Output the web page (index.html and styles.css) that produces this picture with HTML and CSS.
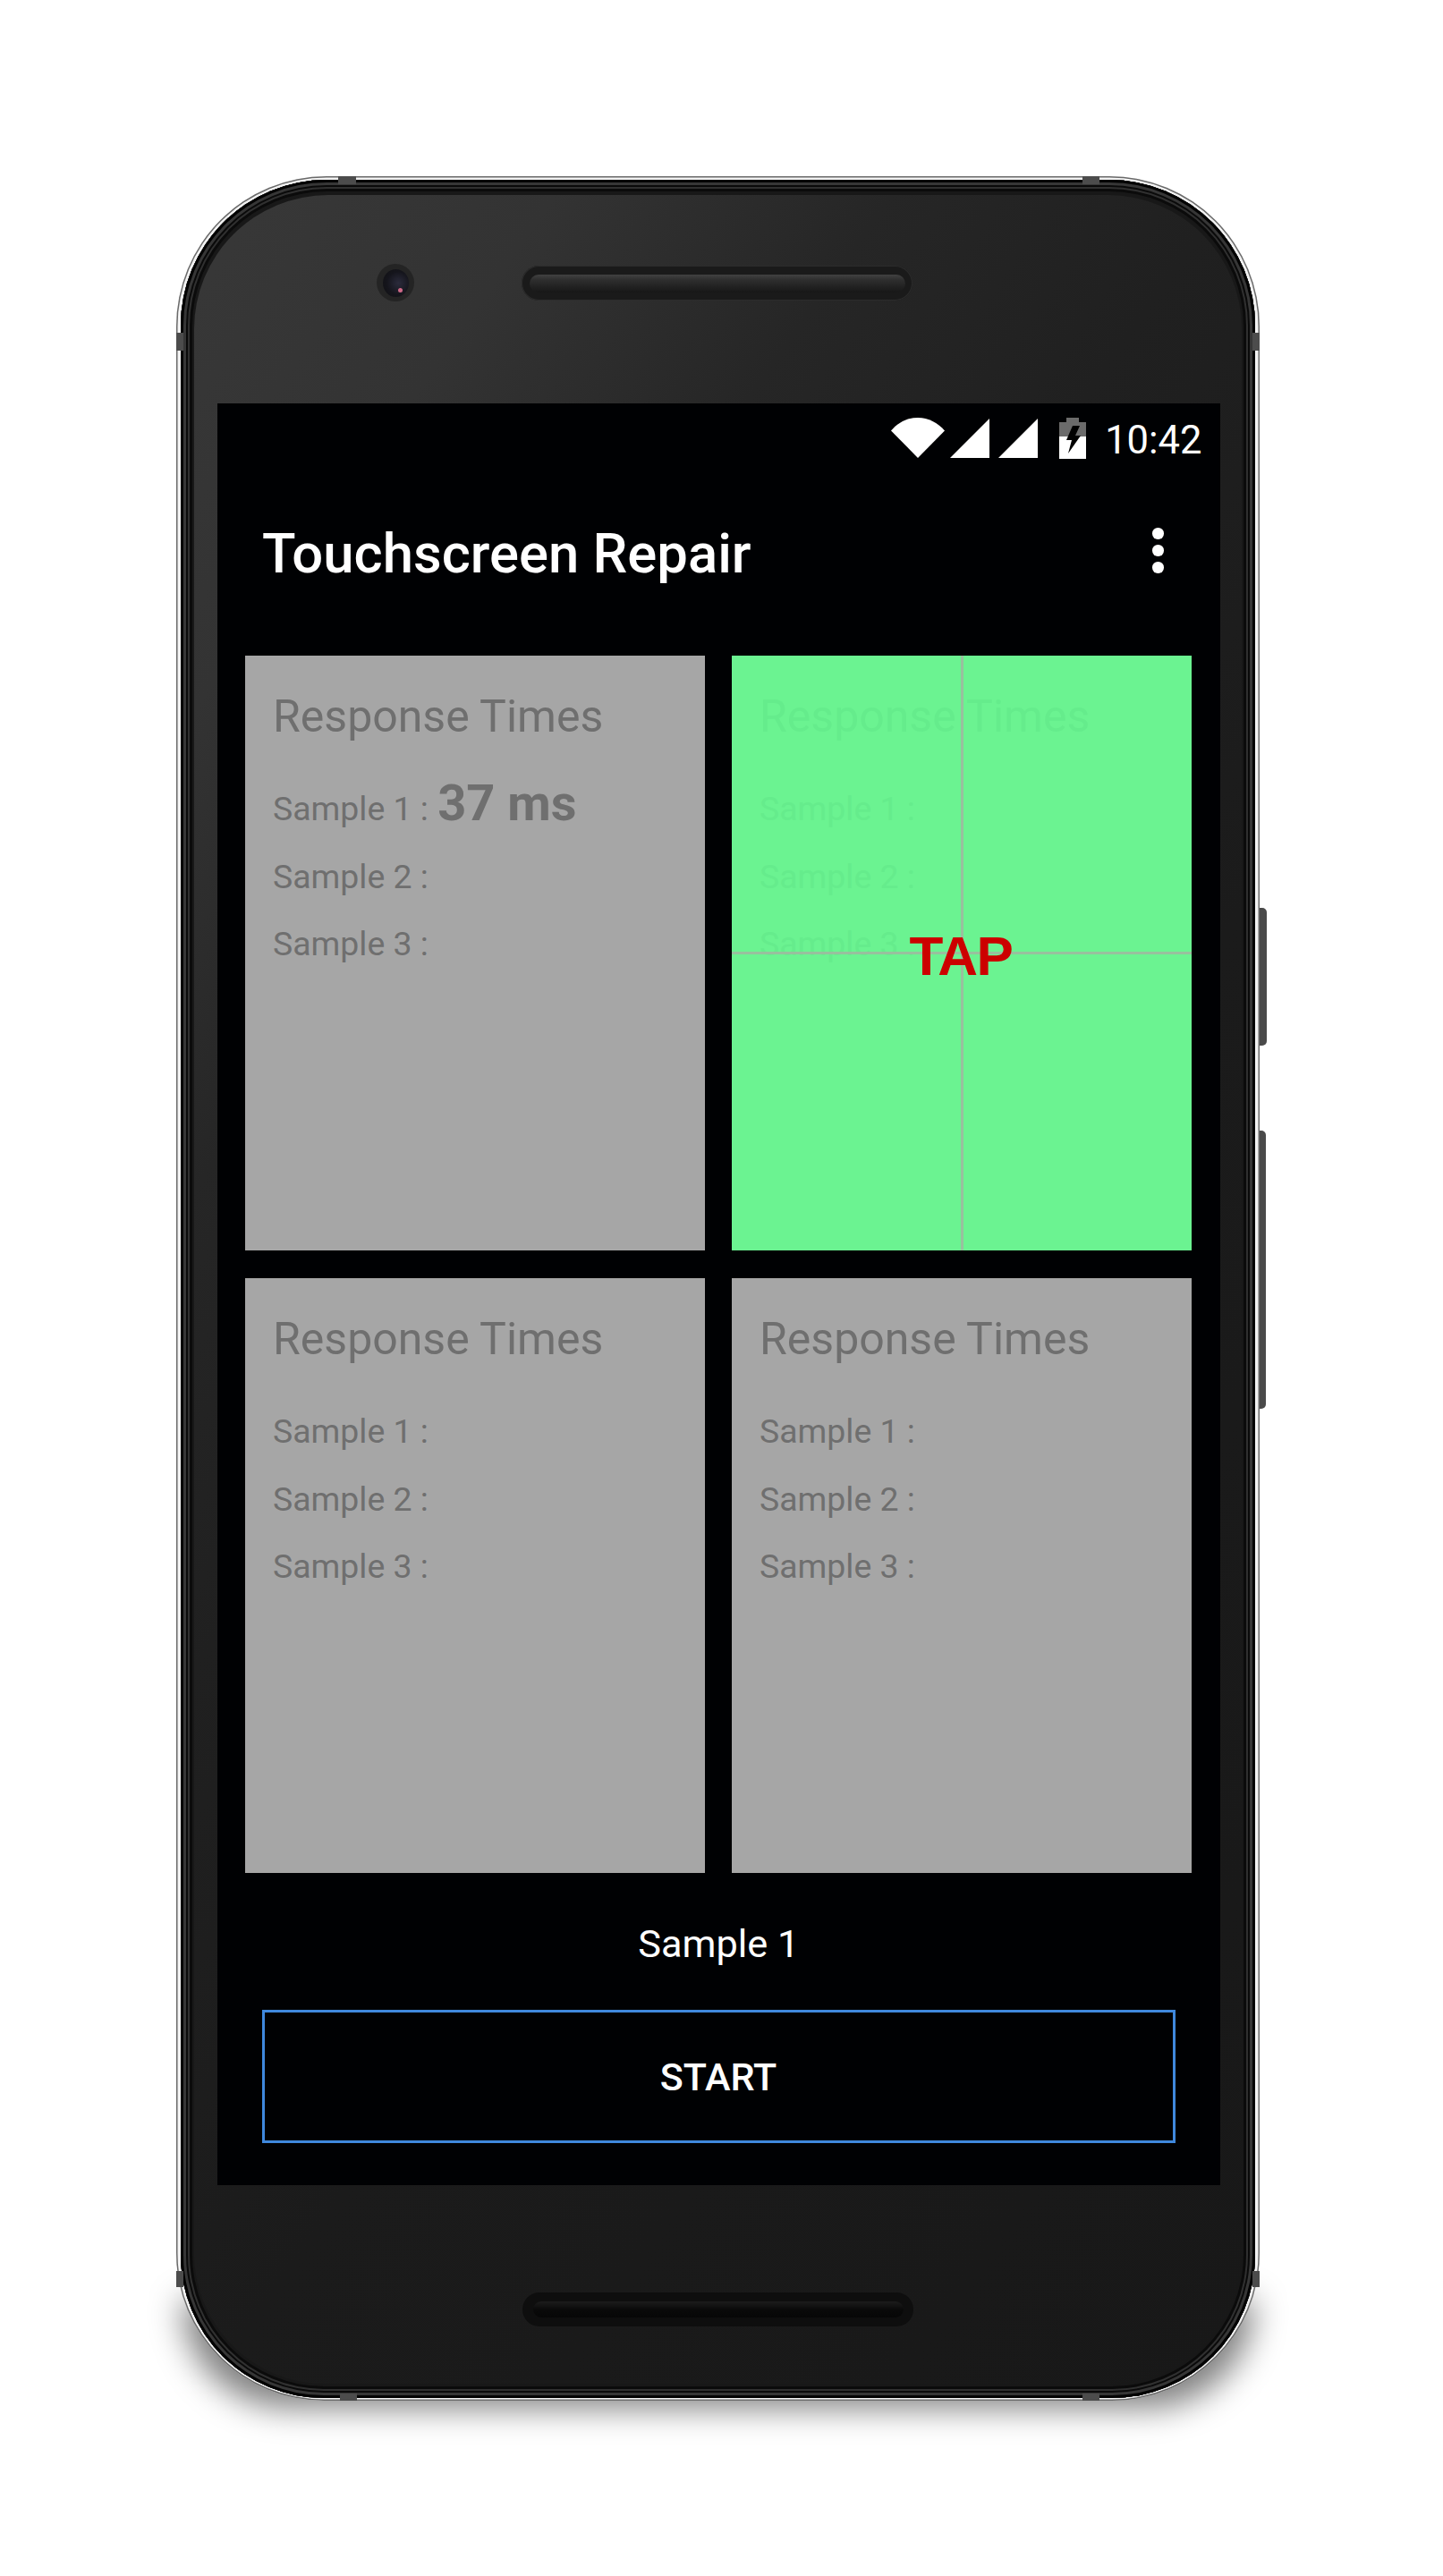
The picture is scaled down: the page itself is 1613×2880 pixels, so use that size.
FILE: index.html
```html
<!DOCTYPE html>
<html lang="en">
<head>
<meta charset="utf-8">
<title>Touchscreen Repair</title>
<link rel="stylesheet" href="styles.css">
</head>
<body>
<div class="device">
  <div class="ground-shadow"></div>
  <div class="side-key key-power"></div>
  <div class="side-key key-volume"></div>
  <div class="metal">
    <span class="notch notch-tl"></span><span class="notch notch-tr"></span>
    <span class="notch notch-lt"></span><span class="notch notch-rt"></span>
    <span class="notch notch-lb"></span><span class="notch notch-rb"></span>
    <span class="notch notch-bl"></span><span class="notch notch-br"></span>
    <div class="rim">
      <div class="face">
        <div class="bezel-top">
          <div class="camera"><div class="lens"><span class="glint"></span></div></div>
          <div class="speaker speaker-top"><div class="grille"></div></div>
        </div>
        <main class="screen">
          <div class="status">
            <svg class="ic-wifi" viewBox="0 0 60 45"><path d="M0 14.500C8 5.500 18 0 30 0s22 5.500 30 14.500L30 45z"/></svg>
            <svg class="ic-signal" viewBox="0 0 44 44"><path d="M44 0v44H0z"/></svg>
            <svg class="ic-signal" viewBox="0 0 44 44"><path d="M44 0v44H0z"/></svg>
            <svg class="ic-battery" viewBox="0 0 30 46"><path fill="#6b6b6b" d="M0 5h8V0h14v5h8v16H0z"/><path fill="#fff" d="M0 21h30v25H0z"/><path fill="#000" d="M15 9h8l-5 11h6L10 40l4-15H8z"/></svg>
            <span class="clock">10:42</span>
          </div>
          <header class="appbar">
            <h1 class="app-title">Touchscreen Repair</h1>
            <div class="overflow"><i></i><i></i><i></i></div>
          </header>
          <div class="grid">
            <section class="card">
              <h2 class="card-title">Response Times</h2>
              <p class="row row-first">Sample 1 : <b class="val">37 ms</b></p>
              <p class="row">Sample 2 :</p>
              <p class="row">Sample 3 :</p>
            </section>
            <section class="card card-active">
              <h2 class="card-title">Response Times</h2>
              <p class="row row-first">Sample 1 :</p>
              <p class="row">Sample 2 :</p>
              <p class="row">Sample 3 :</p>
              <span class="cross-v"></span><span class="cross-h"></span>
              <span class="tap">TAP</span>
            </section>
            <section class="card">
              <h2 class="card-title">Response Times</h2>
              <p class="row row-first">Sample 1 :</p>
              <p class="row">Sample 2 :</p>
              <p class="row">Sample 3 :</p>
            </section>
            <section class="card">
              <h2 class="card-title">Response Times</h2>
              <p class="row row-first">Sample 1 :</p>
              <p class="row">Sample 2 :</p>
              <p class="row">Sample 3 :</p>
            </section>
          </div>
          <div class="sample-label">Sample 1</div>
          <button class="start">START</button>
        </main>
        <div class="bezel-bottom">
          <div class="speaker speaker-bottom"><div class="grille"></div></div>
        </div>
      </div>
    </div>
  </div>
</div>
</body>
</html>
```
FILE: styles.css
```css
* { box-sizing: border-box; }
html, body { margin: 0; padding: 0; background: #fff; }
body { width: 1613px; height: 2880px; overflow: hidden; font-family: Roboto, "Liberation Sans", sans-serif; }

.device { position: relative; width: 1211px; height: 2487px; margin: 197px 0 0 197px; }

.ground-shadow {
  position: absolute; left: 6px; right: 6px; bottom: -8px; height: 120px;
  border-radius: 0 0 160px 160px;
  background: rgba(0,0,0,.5);
  filter: blur(18px);
}

.side-key { position: absolute; left: 1205px; background: #4a4a4a; border-radius: 0 5px 5px 0; }
.key-power { top: 818px; width: 14px; height: 154px; }
.key-volume { top: 1067px; width: 13px; height: 311px; }

.metal {
  position: relative; height: 100%; padding: 4px 5px 3px 5px;
  border-radius: 168px 168px 165px 165px;
  background: #f2f2f2;
  box-shadow: inset 0 0 0 1.500px #6a6a6a;
}
.notch { position: absolute; background: #4c4c4c; z-index: 2; }
.notch-tl { left: 181px; top: 0; width: 20px; height: 9px; }
.notch-tr { left: 1013px; top: 0; width: 19px; height: 9px; }
.notch-bl { left: 183px; bottom: 0; width: 19px; height: 8px; }
.notch-br { left: 1013px; bottom: 0; width: 19px; height: 8px; }
.notch-lt { left: 0; top: 175px; width: 8px; height: 20px; }
.notch-rt { right: 0; top: 175px; width: 8px; height: 20px; }
.notch-lb { left: 0; top: 2342px; width: 8px; height: 18px; }
.notch-rb { right: 0; top: 2342px; width: 8px; height: 18px; }

.rim {
  height: 100%; padding: 17px 15px 16px 15px;
  border-radius: 163px 163px 160px 160px;
  background: #181818;
  box-shadow:
    inset 0 0 0 3px #030303,
    inset 0 0 0 6px #363636,
    inset 0 0 0 8px #0a0a0a,
    inset 0 0 0 10px #303030,
    inset 0 0 0 13px #0b0b0b;
}

.face {
  height: 100%; display: flex; flex-direction: column;
  border-radius: 150px 150px 146px 146px;
  background: linear-gradient(125deg, #383838 0, #333 14%, #262626 27%, #202020 40%, #1b1b1b 60%, #181818 100%);
}

.bezel-top { height: 233px; position: relative; flex: none; }
.camera {
  position: absolute; left: 204px; top: 77px; width: 42px; height: 42px; border-radius: 50%;
  background: #242424; display: flex; align-items: center; justify-content: center;
}
.lens {
  position: relative; width: 29px; height: 31px; border-radius: 50%;
  background: radial-gradient(circle at 60% 50%, #2b2b3c 0, #15151c 55%, #101012 100%);
}
.glint { position: absolute; left: 17px; top: 21px; width: 5px; height: 5px; border-radius: 50%; background: #d06a88; }

.speaker { position: absolute; display: flex; align-items: center; justify-content: center; }
.speaker-top {
  left: 366px; top: 79px; width: 437px; height: 39px; border-radius: 20px;
  background: #1a1a1a; box-shadow: inset 0 0 0 1px #2c2c2c;
}
.speaker-top .grille {
  width: 420px; height: 20px; border-radius: 10px;
  background: linear-gradient(180deg, #414141 0, #2e2e2e 30%, #171717 100%);
}

.screen {
  flex: none; width: 1120.500px; height: 1992px; margin-left: 26px; background: #000103;
  display: flex; flex-direction: column; color: #fff;
}
.status { height: 90px; flex: none; display: flex; align-items: flex-start; padding: 16px 20px 0 0; justify-content: flex-end; }
.status svg { display: block; fill: #fff; flex: none; }
.ic-wifi { width: 60px; height: 45px; margin-right: 6px; }
.ic-signal { width: 44px; height: 44px; margin-right: 10px; margin-top: 1px; }
.ic-battery { width: 30px; height: 46px; margin-left: 14.500px; margin-right: 21px; }
.clock { font-size: 43.500px; line-height: 46px; margin-top: 3px; font-weight: 400; }

.appbar { height: 192px; flex: none; position: relative; display: flex; align-items: flex-start; padding-left: 50px; }
.app-title { margin: 0; padding-top: 44px; font-size: 61.600px; line-height: 68px; font-weight: 500; color: #fff; }
.overflow { position: absolute; left: 1045px; top: 49px; display: flex; flex-direction: column; gap: 6.500px; }
.overflow i { display: block; width: 12.500px; height: 12.500px; border-radius: 50%; background: #fff; }

.grid {
  flex: none; display: grid; grid-template-columns: 513.500px 514px; grid-auto-rows: 665px;
  column-gap: 30.500px; row-gap: 31px; padding-left: 31px;
}
.card { position: relative; background: #a6a6a6; color: #6f6f6f; padding: 32.500px 0 0 31px; overflow: hidden; }
.card-title { margin: 0; font-size: 50px; line-height: 70px; font-weight: 400; }
.row { margin: 0; font-size: 37.400px; line-height: 75.500px; height: 75.500px; white-space: nowrap; }
.row-first { margin-top: 31.500px; }
.val { font-size: 56px; font-weight: 700; line-height: 0; margin-left: 1px; }

.card-active { background: #6bf391; color: #65ec8c; }
.cross-v { position: absolute; left: 255.500px; top: 0; bottom: 0; width: 3px; background: #98c09e; }
.cross-h { position: absolute; left: 0; right: 0; top: 331px; height: 3px; background: #98c09e; }
.tap {
  position: absolute; left: 0; right: 2px; top: 300.500px; text-align: center;
  font-family: "Liberation Sans", Arial, sans-serif; font-size: 62px; letter-spacing: -1.500px; line-height: 70px; font-weight: 700; color: #cc0000;
}

.sample-label { flex: none; height: 153px; padding-top: 55px; text-align: center; font-size: 43.300px; line-height: 50px; }
.start {
  flex: none; display: block; width: 1021px; height: 149px; margin-left: 49.500px;
  background: #000103; border: 3.500px solid #3f88dd; border-radius: 0; color: #fff;
  font-family: Roboto, "Liberation Sans", sans-serif; font-size: 43px; font-weight: 500; padding: 0;
}

.bezel-bottom { flex: 1; position: relative; }
.speaker-bottom {
  left: 367px; top: 120px; width: 437px; height: 38px; border-radius: 19px; background: #0e0e0e;
}
.speaker-bottom .grille {
  width: 414px; height: 18px; border-radius: 9px;
  background: linear-gradient(180deg, #1c1c1c 0, #0a0a0a 50%, #060606 100%);
}
```
